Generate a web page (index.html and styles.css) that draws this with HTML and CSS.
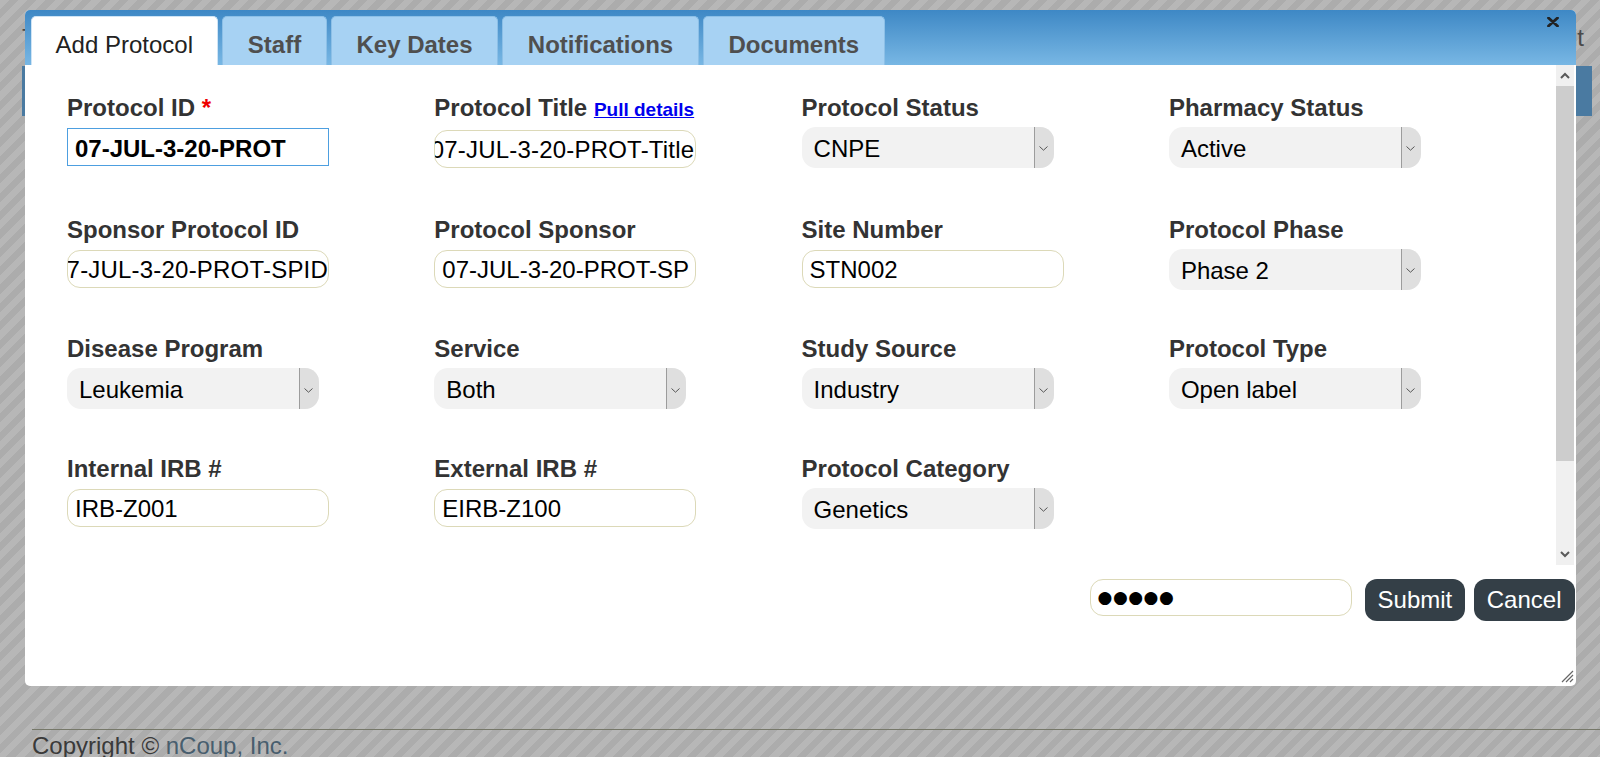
FILE: index.html
```html
<!DOCTYPE html>
<html lang="en">
<head>
<meta charset="utf-8">
<title>Add Protocol</title>
<link rel="stylesheet" href="styles.css">
</head>
<body>
<div class="page">
  <header class="site-head">
    <span class="site-title">Trial Management</span>
    <span class="site-user">Exit</span>
  </header>
  <nav class="navbar"></nav>
  <main class="main"></main>
  <footer class="footer">Copyright © <a class="footer-link" href="#">nCoup, Inc.</a></footer>
</div>

<div class="dialog">
  <div class="dlg-head">
    <ul class="tabs">
      <li class="tab tab-active">Add Protocol</li>
      <li class="tab">Staff</li>
      <li class="tab">Key Dates</li>
      <li class="tab">Notifications</li>
      <li class="tab">Documents</li>
    </ul>
    <button class="close" type="button" aria-label="close">
      <svg width="12" height="10" viewBox="0 0 12 10"><path d="M1.5 1 L10.5 9 M10.5 1 L1.5 9" stroke="#222" stroke-width="2.8" stroke-linecap="round"/></svg>
    </button>
  </div>

  <div class="dlg-body">
    <div class="form-area">
      <div class="form-grid">
        <div class="field">
          <label class="lbl">Protocol ID <span class="req">*</span></label>
          <div class="ctl"><div class="inp inp-focus">07-JUL-3-20-PROT</div></div>
        </div>
        <div class="field">
          <label class="lbl">Protocol Title <a class="pull" href="#">Pull details</a></label>
          <div class="ctl"><div class="inp inp-end"><span class="val">07-JUL-3-20-PROT-Title</span></div></div>
        </div>
        <div class="field">
          <label class="lbl">Protocol Status</label>
          <div class="ctl"><div class="sel"><span class="sel-val">CNPE</span><span class="sel-arrow"><svg width="9" height="5" viewBox="0 0 9 5"><path d="M0.5 0.5 L4.5 4.2 L8.5 0.5" fill="none" stroke="#555" stroke-width="1"/></svg></span></div></div>
        </div>
        <div class="field">
          <label class="lbl">Pharmacy Status</label>
          <div class="ctl"><div class="sel"><span class="sel-val">Active</span><span class="sel-arrow"><svg width="9" height="5" viewBox="0 0 9 5"><path d="M0.5 0.5 L4.5 4.2 L8.5 0.5" fill="none" stroke="#555" stroke-width="1"/></svg></span></div></div>
        </div>

        <div class="field">
          <label class="lbl">Sponsor Protocol ID</label>
          <div class="ctl"><div class="inp inp-end inp-tight"><span class="val">07-JUL-3-20-PROT-SPID</span></div></div>
        </div>
        <div class="field">
          <label class="lbl">Protocol Sponsor</label>
          <div class="ctl"><div class="inp">07-JUL-3-20-PROT-SP</div></div>
        </div>
        <div class="field">
          <label class="lbl">Site Number</label>
          <div class="ctl"><div class="inp">STN002</div></div>
        </div>
        <div class="field">
          <label class="lbl">Protocol Phase</label>
          <div class="ctl"><div class="sel"><span class="sel-val">Phase 2</span><span class="sel-arrow"><svg width="9" height="5" viewBox="0 0 9 5"><path d="M0.5 0.5 L4.5 4.2 L8.5 0.5" fill="none" stroke="#555" stroke-width="1"/></svg></span></div></div>
        </div>

        <div class="field">
          <label class="lbl">Disease Program</label>
          <div class="ctl"><div class="sel"><span class="sel-val">Leukemia</span><span class="sel-arrow"><svg width="9" height="5" viewBox="0 0 9 5"><path d="M0.5 0.5 L4.5 4.2 L8.5 0.5" fill="none" stroke="#555" stroke-width="1"/></svg></span></div></div>
        </div>
        <div class="field">
          <label class="lbl">Service</label>
          <div class="ctl"><div class="sel"><span class="sel-val">Both</span><span class="sel-arrow"><svg width="9" height="5" viewBox="0 0 9 5"><path d="M0.5 0.5 L4.5 4.2 L8.5 0.5" fill="none" stroke="#555" stroke-width="1"/></svg></span></div></div>
        </div>
        <div class="field">
          <label class="lbl">Study Source</label>
          <div class="ctl"><div class="sel"><span class="sel-val">Industry</span><span class="sel-arrow"><svg width="9" height="5" viewBox="0 0 9 5"><path d="M0.5 0.5 L4.5 4.2 L8.5 0.5" fill="none" stroke="#555" stroke-width="1"/></svg></span></div></div>
        </div>
        <div class="field">
          <label class="lbl">Protocol Type</label>
          <div class="ctl"><div class="sel"><span class="sel-val">Open label</span><span class="sel-arrow"><svg width="9" height="5" viewBox="0 0 9 5"><path d="M0.5 0.5 L4.5 4.2 L8.5 0.5" fill="none" stroke="#555" stroke-width="1"/></svg></span></div></div>
        </div>

        <div class="field">
          <label class="lbl">Internal IRB #</label>
          <div class="ctl"><div class="inp">IRB-Z001</div></div>
        </div>
        <div class="field">
          <label class="lbl">External IRB #</label>
          <div class="ctl"><div class="inp">EIRB-Z100</div></div>
        </div>
        <div class="field">
          <label class="lbl">Protocol Category</label>
          <div class="ctl"><div class="sel"><span class="sel-val">Genetics</span><span class="sel-arrow"><svg width="9" height="5" viewBox="0 0 9 5"><path d="M0.5 0.5 L4.5 4.2 L8.5 0.5" fill="none" stroke="#555" stroke-width="1"/></svg></span></div></div>
        </div>
      </div>
    </div>
    <div class="scrollbar">
      <div class="sb-btn"><svg width="10" height="7" viewBox="0 0 10 7"><path d="M1 6 L5 2 L9 6" fill="none" stroke="#5a5a5a" stroke-width="2"/></svg></div>
      <div class="sb-thumb"></div>
      <div class="sb-track"></div>
      <div class="sb-btn"><svg width="10" height="7" viewBox="0 0 10 7"><path d="M1 1 L5 5 L9 1" fill="none" stroke="#5a5a5a" stroke-width="2"/></svg></div>
    </div>
  </div>

  <div class="dlg-buttons">
    <div class="inp pwd"><span class="dots">●●●●●</span></div>
    <button class="btn" type="button">Submit</button>
    <button class="btn" type="button">Cancel</button>
  </div>
  <span class="resizer"><svg width="14" height="14" viewBox="0 0 14 14"><path d="M13 2 L2 13 M13 6 L6 13 M13 10 L10 13" stroke="#666" stroke-width="1.2"/></svg></span>
</div>
</body>
</html>
```

FILE: styles.css
```css
* { box-sizing: border-box; }

html, body {
  margin: 0;
  padding: 0;
  height: 100%;
  overflow: hidden;
}

body {
  font-family: "Liberation Sans", Arial, sans-serif;
  font-size: 24px;
  background: repeating-linear-gradient(135deg, #b7b7b7 0 6.5px, #acacac 6.5px 13px);
  position: relative;
}

/* background page */
.page {
  padding-left: 22px;
}

.site-head {
  display: flex;
  justify-content: space-between;
  padding: 24px 16px 0 0;
  height: 66px;
  color: #4a4a4a;
}

.navbar {
  height: 50px;
  margin-right: 8px;
  background: #4a7aa1;
}

.main {
  height: 613px;
}

.footer {
  margin-left: 10px;
  border-top: 1px solid #767869;
  padding-top: 2px;
  color: #3a3a3a;
  white-space: nowrap;
}

.footer-link {
  color: #485e6e;
  text-decoration: none;
}

/* dialog */
.dialog {
  position: absolute;
  left: 24.5px;
  top: 10px;
  width: 1551px;
  height: 676px;
  background: #fff;
  border-radius: 5px;
  display: flex;
  flex-direction: column;
}

.dlg-head {
  position: relative;
  height: 55px;
  flex-shrink: 0;
  border-radius: 5px 5px 0 0;
  background: linear-gradient(#3e88c5, #78b7e4);
}

.tabs {
  list-style: none;
  margin: 0;
  padding: 6.3px 0 0 6.1px;
  display: flex;
  gap: 4.3px;
  height: 100%;
}

.tab {
  height: 48.7px;
  padding: 14px 24.5px 0;
  border: 1px solid #8dc0e7;
  border-bottom: none;
  border-radius: 5px 5px 0 0;
  background: #a7d2f3;
  color: #4f4f4f;
  font-weight: bold;
  white-space: nowrap;
}

.tab-active {
  background: #fff;
  border-color: #cfe4f5;
  color: #222;
  font-weight: normal;
  padding: 14px 24px 0;
}

.close {
  position: absolute;
  right: 13px;
  top: 2px;
  width: 20px;
  height: 20px;
  padding: 0;
  border: none;
  background: transparent;
  display: flex;
  align-items: center;
  justify-content: center;
}

.dlg-body {
  height: 500px;
  flex-shrink: 0;
  display: flex;
}

.form-area {
  flex: 1;
  overflow: hidden;
}

.form-grid {
  display: grid;
  grid-template-columns: repeat(4, 367.3px);
  row-gap: 45.3px;
  padding: 29px 0 0 42.5px;
}

.lbl {
  display: block;
  font-weight: bold;
  color: #333;
  line-height: 27.6px;
  margin-bottom: 4.8px;
  white-space: nowrap;
}

.req { color: #e00; }

.pull {
  font-size: 19px;
  color: #0000ee;
  text-decoration: underline;
}

.ctl {
  height: 42px;
  display: flex;
  align-items: center;
}

.inp {
  width: 262px;
  height: 38px;
  border: 1px solid #dcd9b8;
  border-radius: 13px;
  padding: 2px 7px 0;
  display: flex;
  align-items: center;
  overflow: hidden;
  white-space: nowrap;
  color: #000;
  background: #fff;
}

.inp-focus {
  border-color: #4d9fe0;
  border-radius: 0;
  font-weight: bold;
  padding-top: 3px;
}

.inp-end {
  justify-content: flex-end;
  padding-right: 1px;
}

.inp-end .val {
  letter-spacing: 0.2px;
}

.inp-tight {
  padding-right: 0;
}

.val { flex-shrink: 0; }

.sel {
  width: 252px;
  height: 41px;
  border-radius: 14px;
  background: #f2f2f2;
  display: flex;
  overflow: hidden;
  color: #000;
}

.sel-val {
  flex: 1;
  display: flex;
  align-items: center;
  padding: 3px 0 0 12px;
  white-space: nowrap;
}

.sel-arrow {
  width: 20px;
  background: #dfdfdf;
  border-left: 1px solid #9c9c9c;
  display: flex;
  align-items: center;
  justify-content: center;
  padding: 3px 2px 0 0;
}

.scrollbar {
  width: 18px;
  margin-right: 2px;
  display: flex;
  flex-direction: column;
  background: #f0f0f0;
}

.sb-btn {
  height: 21px;
  display: flex;
  align-items: center;
  justify-content: center;
}

.sb-thumb {
  height: 375px;
  background: #cdcdcd;
}

.sb-track { flex: 1; }

.dlg-buttons {
  flex: 1;
  display: flex;
  justify-content: flex-end;
  align-items: flex-start;
  padding: 13.6px 1px 0 0;
  gap: 8.5px;
}

.pwd {
  height: 37.5px;
  margin-right: 4.5px;
  padding-top: 0;
}

.dots {
  font-family: "DejaVu Sans", sans-serif;
  font-size: 17px;
  letter-spacing: 0.5px;
}

.btn {
  height: 42px;
  padding: 1px 13px 0;
  border: none;
  border-radius: 12px;
  background: #343f47;
  color: #fff;
  font-family: "Liberation Sans", Arial, sans-serif;
  font-size: 24px;
}

.resizer {
  position: absolute;
  right: 2px;
  bottom: 3px;
  width: 14px;
  height: 14px;
  display: flex;
}
```
